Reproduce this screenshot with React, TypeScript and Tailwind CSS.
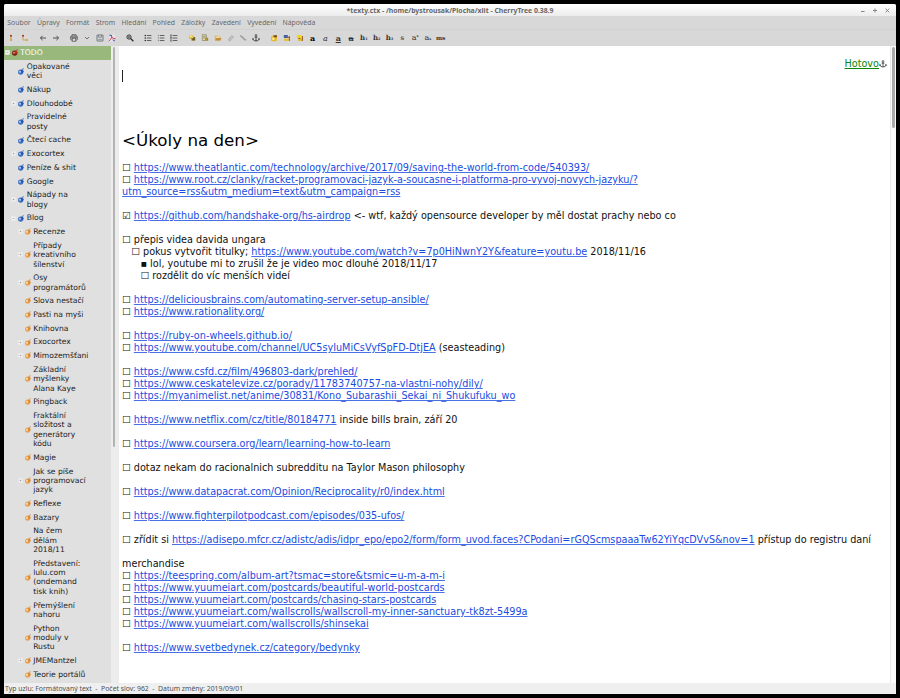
import React from "react";

type Node = { level: 0 | 1 | 2; lines: string[]; expand?: "+" | "-" };

const nodes: Node[] = [
  { level: 0, lines: ["TODO"], expand: "-" },
  { level: 1, lines: ["Opakované", "věci"] },
  { level: 1, lines: ["Nákup"] },
  { level: 1, lines: ["Dlouhodobé"], expand: "+" },
  { level: 1, lines: ["Pravidelné", "posty"] },
  { level: 1, lines: ["Čtecí cache"] },
  { level: 1, lines: ["Exocortex"], expand: "+" },
  { level: 1, lines: ["Peníze & shit"] },
  { level: 1, lines: ["Google"] },
  { level: 1, lines: ["Nápady na", "blogy"], expand: "+" },
  { level: 1, lines: ["Blog"], expand: "-" },
  { level: 2, lines: ["Recenze"], expand: "+" },
  { level: 2, lines: ["Případy", "kreativního", "šílenství"], expand: "+" },
  { level: 2, lines: ["Osy", "programátorů"], expand: "+" },
  { level: 2, lines: ["Slova nestačí"] },
  { level: 2, lines: ["Pasti na myši"] },
  { level: 2, lines: ["Knihovna"] },
  { level: 2, lines: ["Exocortex"], expand: "+" },
  { level: 2, lines: ["Mimozemšťani"], expand: "+" },
  { level: 2, lines: ["Základní", "myšlenky", "Alana Kaye"] },
  { level: 2, lines: ["Pingback"] },
  { level: 2, lines: ["Fraktální", "složitost a", "generátory", "kódu"] },
  { level: 2, lines: ["Magie"] },
  { level: 2, lines: ["Jak se píše", "programovací", "jazyk"], expand: "+" },
  { level: 2, lines: ["Reflexe"] },
  { level: 2, lines: ["Bazary"] },
  { level: 2, lines: ["Na čem", "dělám", "2018/11"] },
  { level: 2, lines: ["Představení:", "lulu.com", "(ondemand", "tisk knih)"] },
  { level: 2, lines: ["Přemýšlení", "nahoru"] },
  { level: 2, lines: ["Python", "moduly v", "Rustu"] },
  { level: 2, lines: ["JMEMantzel"], expand: "+" },
  { level: 2, lines: ["Teorie portálů"] },
];

const L = ({ children }: { children: React.ReactNode }) => (
  <span className="text-[#1a4be0] underline decoration-[#1a4be0]/80 decoration-1">{children}</span>
);

const body: React.ReactNode[] = [
  <>☐ <L>https://www.theatlantic.com/technology/archive/2017/09/saving-the-world-from-code/540393/</L></>,
  <>☐ <L>https://www.root.cz/clanky/racket-programovaci-jazyk-a-soucasne-i-platforma-pro-vyvoj-novych-jazyku/?</L></>,
  <L>utm_source=rss&amp;utm_medium=text&amp;utm_campaign=rss</L>,
  null,
  <>☑ <L>https://github.com/handshake-org/hs-airdrop</L>{" <- wtf, každý opensource developer by měl dostat prachy nebo co"}</>,
  null,
  <>☐ přepis videa davida ungara</>,
  <>{"   ☐ pokus vytvořit titulky; "}<L>https://www.youtube.com/watch?v=7p0HiNwnY2Y&amp;feature=youtu.be</L>{" 2018/11/16"}</>,
  <>{"      ▪ lol, youtube mi to zrušil že je video moc dlouhé 2018/11/17"}</>,
  <>{"      ☐ rozdělit do víc menších videí"}</>,
  null,
  <>☐ <L>https://deliciousbrains.com/automating-server-setup-ansible/</L></>,
  <>☐ <L>https://www.rationality.org/</L></>,
  null,
  <>☐ <L>https://ruby-on-wheels.github.io/</L></>,
  <>☐ <L>https://www.youtube.com/channel/UC5syIuMiCsVyfSpFD-DtjEA</L>{" (seasteading)"}</>,
  null,
  <>☐ <L>https://www.csfd.cz/film/496803-dark/prehled/</L></>,
  <>☐ <L>https://www.ceskatelevize.cz/porady/11783740757-na-vlastni-nohy/dily/</L></>,
  <>☐ <L>https://myanimelist.net/anime/30831/Kono_Subarashii_Sekai_ni_Shukufuku_wo</L></>,
  null,
  <>☐ <L>https://www.netflix.com/cz/title/80184771</L>{" inside bills brain, září 20"}</>,
  null,
  <>☐ <L>https://www.coursera.org/learn/learning-how-to-learn</L></>,
  null,
  <>☐ dotaz nekam do racionalnich subredditu na Taylor Mason philosophy</>,
  null,
  <>☐ <L>https://www.datapacrat.com/Opinion/Reciprocality/r0/index.html</L></>,
  null,
  <>☐ <L>https://www.fighterpilotpodcast.com/episodes/035-ufos/</L></>,
  null,
  <>☐ zřídit si <L>https://adisepo.mfcr.cz/adistc/adis/idpr_epo/epo2/form/form_uvod.faces?CPodani=rGQScmspaaaTw62YiYqcDVvS&amp;nov=1</L>{" přístup do registru daní"}</>,
  null,
  <>merchandise</>,
  <>☐ <L>https://teespring.com/album-art?tsmac=store&amp;tsmic=u-m-a-m-i</L></>,
  <>☐ <L>https://www.yuumeiart.com/postcards/beautiful-world-postcards</L></>,
  <>☐ <L>https://www.yuumeiart.com/postcards/chasing-stars-postcards</L></>,
  <>☐ <L>https://www.yuumeiart.com/wallscrolls/wallscroll-my-inner-sanctuary-tk8zt-5499a</L></>,
  <>☐ <L>https://www.yuumeiart.com/wallscrolls/shinsekai</L></>,
  null,
  <>☐ <L>https://www.svetbedynek.cz/category/bedynky</L></>,
];

const cherryColors = [
  ["#7d1d10", "#b5341f", "#e58a70"],
  ["#3f6fc0", "#2c58ac", "#b4cdf5"],
  ["#e8a252", "#d88a38", "#fde3b4"],
];

function Cherry({ level }: { level: 0 | 1 | 2 }) {
  const [a, b, c] = cherryColors[level];
  return (
    <svg width="6" height="7" viewBox="0 0 6 7" className="block shrink-0">
      <path d="M3.2 2.6Q3.8 1 5.8 0.7" stroke={b} strokeWidth="0.8" fill="none" />
      <circle cx="2.7" cy="4.1" r="2.65" fill={a} />
      <circle cx="4" cy="3.2" r="1.5" fill={b} />
      <circle cx="2" cy="3.7" r="1" fill={c} />
    </svg>
  );
}

function Expander({ kind }: { kind?: "+" | "-" }) {
  return (
    <svg width="5" height="5" viewBox="0 0 5 5" className="block shrink-0">
      {kind && <rect x="0.5" y="0.5" width="4" height="4" fill="#f4f4f4" stroke="#e8e8e8" strokeWidth="0.6" />}
      {kind && <path d={kind === "+" ? "M1.6 2.5H3.4M2.5 1.6V3.4" : "M1.6 2.5H3.4"} stroke="#999" strokeWidth="0.7" />}
    </svg>
  );
}

const indent = ["pl-[0.6px]", "pl-[7.2px]", "pl-[13.6px]"];

function Tree() {
  return (
    <div className="w-[107px] shrink-0 overflow-hidden bg-[#e0e0e0] text-[7.6px] leading-[9.345px] text-[#1c1c1c]">
      {nodes.map((n, i) => (
        <div
          key={i}
          className={`flex items-center gap-[2.3px] py-[2.2px] whitespace-nowrap ${indent[n.level]} ${n.level === 0 ? "bg-[#99b97c] text-white" : ""}`}
        >
          <Expander kind={n.expand} />
          <Cherry level={n.level} />
          <div>{n.lines.map((t) => <div key={t}>{t}</div>)}</div>
        </div>
      ))}
    </div>
  );
}

const Ico = ({ children }: { children: React.ReactNode }) => (
  <svg width="8" height="8" viewBox="0 0 8 8" fill="none" className="block">{children}</svg>
);
const Anchor = () => (
  <>
    <circle cx="4" cy="1.3" r="0.8" stroke="#333" strokeWidth="0.7" />
    <path d="M4 2V7M2.6 3.1H5.4M0.8 4.8Q1.3 7 4 7Q6.7 7 7.2 4.8M0.4 5.6L0.9 4.4L1.8 5.2M7.6 5.6L7.1 4.4L6.2 5.2" stroke="#333" strokeWidth="0.8" />
  </>
);
const Slot = ({ children }: { children: React.ReactNode }) => (
  <div className="flex w-[12.8px] shrink-0 items-center justify-center">{children}</div>
);
const Glyph = ({ className = "", children }: { className?: string; children: React.ReactNode }) => (
  <Slot><span className={`font-['DejaVu_Serif',serif] text-[8px] leading-[9px] text-[#333] ${className}`}>{children}</span></Slot>
);
const Tiny = ({ children }: { children: React.ReactNode }) => <span className="text-[3.5px]">{children}</span>;

function List({ kind }: { kind: "dot" | "num" | "todo" }) {
  return (
    <Ico>
      {[1.5, 4, 6.5].map((y) => (
        <g key={y}>
          <path d={`M2.8 ${y}H7.4`} stroke="#555" strokeWidth="0.9" />
          {kind === "dot" && <rect x="0.6" y={y - 0.6} width="1.4" height="1.2" fill="#333" />}
          {kind === "num" && <path d={`M1.4 ${y - 0.7}V${y + 0.7}`} stroke="#666" strokeWidth="0.7" />}
          {kind === "todo" && <rect x="0.7" y={y - 0.6} width="1.2" height="1.2" stroke="#555" strokeWidth="0.5" />}
        </g>
      ))}
    </Ico>
  );
}

function Toolbar() {
  return (
    <div className="flex h-4 shrink-0 items-center bg-[#d8d8d8] pl-[0.6px]">
      <div className="flex w-[32.2px]">
        <Slot><Ico><circle cx="4" cy="1.8" r="1.1" fill="#a33a20" /><path d="M4 3V5" stroke="#c79b3c" /><circle cx="4" cy="6" r="1.1" fill="#d99b35" /></Ico></Slot>
        <div className="w-[1.2px]" />
        <Slot><Ico><circle cx="2" cy="1.8" r="1.1" fill="#a33a20" /><path d="M2 3V6H5" stroke="#c79b3c" strokeWidth="0.8" /><circle cx="6" cy="6" r="1.1" fill="#d99b35" /></Ico></Slot>
      </div>
      <div className="flex w-[30.8px]">
        <Slot><Ico><path d="M7 4H1.4M3.6 1.8L1.4 4L3.6 6.2" stroke="#444" strokeWidth="0.9" /></Ico></Slot>
        <Slot><Ico><path d="M1 4H6.6M4.4 1.8L6.6 4L4.4 6.2" stroke="#444" strokeWidth="0.9" /></Ico></Slot>
      </div>
      <div className="flex w-[56px]">
        <Slot><Ico><rect x="0.7" y="2" width="6.6" height="4" rx="0.8" stroke="#555" strokeWidth="0.9" /><path d="M2 2V0.7H6V2M1 3.3H7" stroke="#555" strokeWidth="0.8" /><rect x="2.2" y="4.2" width="3.6" height="3" fill="#ddd" stroke="#555" strokeWidth="0.8" /></Ico></Slot>
        <Slot><Ico><path d="M2 3L4 5L6 3" stroke="#555" strokeWidth="0.8" /></Ico></Slot>
        <Slot><Ico><rect x="1" y="1" width="6" height="6" rx="0.4" stroke="#555d6a" strokeWidth="0.8" /><path d="M2.5 1V3.2H5.5V1M2.4 5.4H5.6" stroke="#6a7280" strokeWidth="0.7" /></Ico></Slot>
        <Slot><Ico><rect x="1.6" y="0.6" width="5" height="6.8" fill="#e6e6f0" /><path d="M3 0.8C4.5 2 3.5 5 0.8 7.2M3.6 3Q5 5 7.4 4.8" stroke="#c63232" strokeWidth="1" /><path d="M1.4 1.2L3.6 1.6M4.6 5.8L7 7.2" stroke="#4355b0" strokeWidth="1" /></Ico></Slot>
      </div>
      <div className="flex w-[18.3px]">
        <Slot><Ico><circle cx="3" cy="3" r="2.1" stroke="#333" strokeWidth="1" /><path d="M4.6 4.6L7.4 7.3" stroke="#333" strokeWidth="1.4" /><path d="M2 3H4M3 2V4" stroke="#333" strokeWidth="0.7" /></Ico></Slot>
      </div>
      <div className="flex w-[44px]">
        <Slot><List kind="dot" /></Slot>
        <Slot><List kind="num" /></Slot>
        <Slot><List kind="todo" /></Slot>
      </div>
      <div className="flex w-[82px]">
        <Slot><Ico><rect x="1" y="1.4" width="4.5" height="3.6" fill="#e8c33a" /><rect x="3.6" y="3.2" width="3.6" height="3.4" fill="#72601f" /><path d="M2 2L5 4" stroke="#fff3b0" /></Ico></Slot>
        <Slot><Ico><rect x="1.2" y="0.8" width="4.2" height="5.8" fill="#e5d98e" stroke="#777" strokeWidth="0.6" /><path d="M2.2 2.4H4.6M2.2 4H4.6" stroke="#666" strokeWidth="0.6" /><rect x="4.2" y="3.8" width="3" height="3" fill="#a58e38" /></Ico></Slot>
        <Slot><Ico><path d="M0.8 1.5H3.2L4 2.4H6.6V6.5H0.8Z" fill="#e3b65a" /><path d="M1 6.5L2.4 4H7.4L6.4 6.5Z" fill="#bf8f3d" /><path d="M2 3.2H5.6" stroke="#fff" strokeWidth="0.7" /></Ico></Slot>
        <Slot><Ico><path d="M2.2 6L5.2 2.4Q6.2 1.6 6.5 2.6L3.6 6.6Q2 7.6 1.5 5.8L4.6 1.4" stroke="#aaa" strokeWidth="0.9" /></Ico></Slot>
        <Slot><Ico><path d="M1.2 1.6L3.8 3.5M3.2 3.2L5 5M4.5 4.5L7 6.4" stroke="#a2a2a2" strokeWidth="1.7" /></Ico></Slot>
        <Slot><Ico><Anchor /></Ico></Slot>
      </div>
      <div className="flex">
        <Slot><Ico><path d="M1 3L4 0.8L7 2V6.8L4 7.4L1 6.5Z" fill="#e6b92c" /><path d="M3.3 1.4L6.8 0.9V3.2L4 3.5Z" fill="#744c2c" /><rect x="2.4" y="3.6" width="2" height="2.2" fill="#fff2b0" /></Ico></Slot>
        <Slot><Ico><rect x="0.8" y="1" width="4" height="3" fill="#465eae" /><rect x="1" y="4.6" width="5.6" height="2.3" fill="#e5bf40" /><path d="M6.4 2V6.8M3.4 3.3H6" stroke="#8b5c32" /></Ico></Slot>
        <Slot><Ico><rect x="0.8" y="1" width="4.4" height="3" fill="#f1d329" /><rect x="2.3" y="4" width="4.8" height="3" fill="#e5bd24" /><path d="M6.4 2V6.8M2.3 4.4H4.2" stroke="#8b5c32" /></Ico></Slot>
        <Glyph className="font-bold !text-black">a</Glyph>
        <Glyph className="italic">a</Glyph>
        <Glyph className="font-bold underline">a</Glyph>
        <Glyph className="font-bold line-through">a</Glyph>
        <Glyph className="!text-[7px] font-bold">h<Tiny>1</Tiny></Glyph>
        <Glyph className="!text-[7px] font-bold">h<Tiny>2</Tiny></Glyph>
        <Glyph className="!text-[7px] font-bold">h<Tiny>3</Tiny></Glyph>
        <Glyph className="!text-[6.5px] font-bold !text-[#555]">s</Glyph>
        <Glyph>a<span className="relative -top-[2.5px] text-[3.5px] font-bold">s</span></Glyph>
        <Glyph>a<span className="text-[3.5px] font-bold">s</span></Glyph>
        <Glyph className="!text-[5.8px] font-bold">ms</Glyph>
      </div>
    </div>
  );
}

const menu = ["Soubor", "Úpravy", "Formát", "Strom", "Hledání", "Pohled", "Záložky", "Zavedení", "Vyvedení", "Nápověda"];

export default function App() {
  return (
    <div className="h-[698px] w-[900px] overflow-hidden bg-black pt-1 pl-1 font-['DejaVu_Sans',sans-serif]">
      <div className="flex h-[690px] w-[892px] flex-col overflow-hidden rounded-t-[2px] bg-[#d8d8d8]">
        <div className="flex h-3 shrink-0 items-center bg-linear-to-b from-white to-[#ececec] font-['Noto_Sans',sans-serif]">
          <div className="w-[60px]" />
          <div className="flex-1 pt-[2px] text-center text-[6.86px] leading-[10px] font-bold whitespace-nowrap text-[#666]">
            *texty.ctx - /home/bystrousak/Plocha/xlit - CherryTree 0.38.9
          </div>
          <svg width="60" height="12" viewBox="0 0 60 12" fill="none" stroke="#888" strokeWidth="1">
            <path d="M25 7.5H28.6M37 6.5H41M39 4.5V8.5M49.6 4.6L53.2 8.4M53.2 4.6L49.6 8.4" />
          </svg>
        </div>
        <div className="flex h-[14px] shrink-0 items-center gap-[6.32px] border-b border-[#d2d2d2] pl-[3.3px] font-['Noto_Sans',sans-serif] text-[6.86px] leading-[10px] text-[#686868]">
          {menu.map((m) => <span key={m}>{m}</span>)}
        </div>
        <Toolbar />
        <div className="flex min-h-0 flex-1">
          <Tree />
          <div className="w-[7.5px] shrink-0 bg-[#ededed] pt-px pl-[1.5px]">
            <div className="h-[400px] w-[2.5px] rounded-full bg-[#b4b4b4]" />
          </div>
          <div className="min-w-0 flex-1 bg-white pl-[3.6px] text-[9.66px] leading-3 whitespace-pre text-[#111]">
            <div className="flex h-6 items-end justify-end pr-[3px] text-[#0b860b]">
              <span className="underline">Hotovo</span>
              <div className="mb-[2px]"><Ico><Anchor /></Ico></div>
            </div>
            <div className="h-3 w-px bg-[#222]" />
            <div className="mt-[48px] h-5 text-[16.7px] leading-5 text-black">{"<Úkoly na den>"}</div>
            <div className="mt-3">
              {body.map((b, i) => <div key={i} className="h-3">{b}</div>)}
            </div>
          </div>
          <div className="w-[6px] shrink-0 border-l border-[#e8e8e8] bg-[#fafafa] pt-px pl-px">
            <div className="h-[81px] w-[2.5px] rounded-full bg-[#aaa]" />
          </div>
        </div>
        <div className="flex h-[11px] shrink-0 items-center bg-[#efefef] pl-[1px] font-['Noto_Sans',sans-serif] text-[6.86px] leading-[10px] whitespace-pre text-[#505050]">
          {"Typ uzlu: Formátovaný text  -  Počet slov: 962  -  Datum změny: 2019/09/01"}
        </div>
      </div>
    </div>
  );
}
